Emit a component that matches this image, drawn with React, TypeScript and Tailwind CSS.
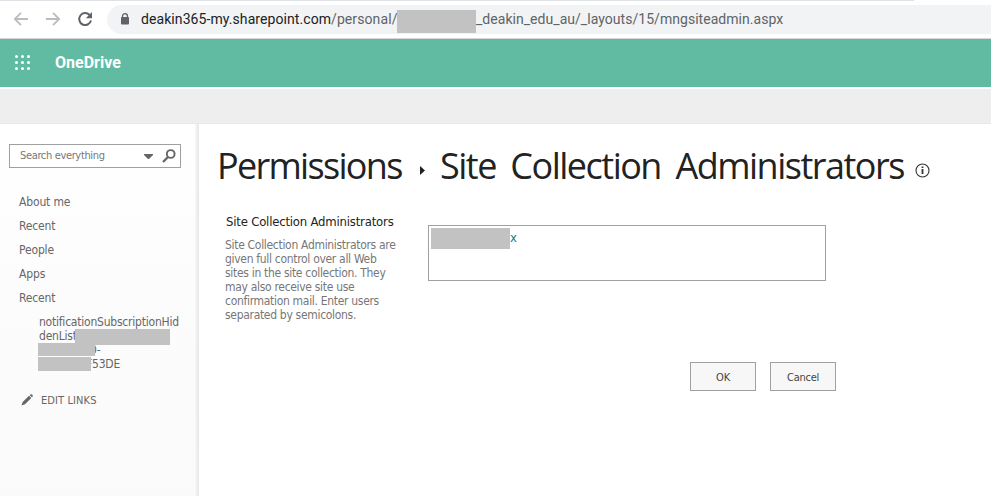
import React from "react";

function BrowserBar() {
  return (
    <header className="flex h-[39px] flex-col border-b border-[#d5d7da] bg-white font-[Roboto,sans-serif]">
      <div className="h-px w-[914px] shrink-0 bg-[#dee1e6]" />
      <div className="mt-1 flex h-[29px] items-center">
        <svg className="-mt-px ml-[13px] size-4 shrink-0" viewBox="0 0 16 16" fill="none" stroke="#babcbe" strokeWidth="1.8">
          <path d="M15 8H2.5M8 1.8L1.8 8L8 14.2" />
        </svg>
        <svg className="-mt-px ml-4 size-4 shrink-0" viewBox="0 0 16 16" fill="none" stroke="#babcbe" strokeWidth="1.8">
          <path d="M1 8H13.5M8 1.8L14.2 8L8 14.2" />
        </svg>
        <svg className="-mt-px ml-4 size-4 shrink-0" viewBox="0 0 16 16">
          <path d="M14 9.6A6 6 0 1 1 12.6 4" fill="none" stroke="#5f6368" strokeWidth="2" />
          <path d="M15 1V7.2H8.8Z" fill="#5f6368" />
        </svg>
        <div className="ml-[14px] flex h-[29px] flex-1 items-center rounded-l-full bg-[#f1f3f4] pl-[13px]">
          <svg className="-mt-0.5 h-3 w-2.5 shrink-0" viewBox="0 0 10 12">
            <path d="M2.5 5V3.2a2.5 2.5 0 0 1 5 0V5" fill="none" stroke="#5f6368" strokeWidth="1.3" />
            <rect x="1" y="4" width="8" height="7.6" rx="1" fill="#5f6368" />
          </svg>
          <div className="ml-[11px] flex items-center text-sm leading-[18px] whitespace-nowrap text-[#5f6368]">
            <span className="-mt-0.5 w-[190px] tracking-[0.08px] text-[#202124]">deakin365-my.sharepoint.com</span>
            <span className="-mt-0.5 w-[66px] tracking-[0.1px]">/personal/</span>
            <span className="mt-[3px] h-[23px] w-[79px] bg-[#c2c2c2]" />
            <span className="-mt-0.5 tracking-[0.04px]">_deakin_edu_au/_layouts/15/mngsiteadmin.aspx</span>
          </div>
        </div>
      </div>
    </header>
  );
}

function SuiteBar() {
  return (
    <div className="flex h-12 items-center bg-[#60bba2] pl-[15px]">
      <svg className="-mt-0.5 size-[15px]" viewBox="0 0 15 15" fill="white">
        {[1.5, 7.5, 13.5].map((y) => [1.5, 7.5, 13.5].map((x) => <circle key={`${x}-${y}`} cx={x} cy={y} r="1.5" />))}
      </svg>
      <span className="ml-[25px] font-[Roboto,sans-serif] text-base font-bold text-white">OneDrive</span>
    </div>
  );
}

function Sidebar() {
  return (
    <aside className="flex w-[199px] shrink-0 bg-gradient-to-b from-white via-[#fcfcfc] via-50% to-[#fafafa] text-[12px] text-[#666]">
      <div className="flex w-[195px] flex-col">
        <div className="mt-5 ml-[9px] flex h-6 w-[172px] shrink-0 items-center border border-[#a0a0a0] bg-white pl-[10px] text-[11px] text-[#777]">
          <span className="mt-px w-[123px] tracking-[-0.35px] whitespace-nowrap">Search everything</span>
          <svg className="mt-px ml-px h-[5px] w-[9px]" viewBox="0 0 9 5"><path d="M0 0H9V1L5 5H4L0 1Z" fill="#666" /></svg>
          <svg className="ml-[9px] size-[14px]" viewBox="0 0 14 14" fill="none" stroke="#666">
            <circle cx="8.7" cy="5" r="3.9" strokeWidth="1.9" />
            <path d="M6 8L1 13" strokeWidth="2.3" />
          </svg>
        </div>
        <nav className="mt-[22px] ml-[19px] flex flex-col leading-6 tracking-[-0.15px]">
          <a>About me</a>
          <a>Recent</a>
          <a>People</a>
          <a>Apps</a>
          <a>Recent</a>
        </nav>
        <div className="mt-[5px] ml-[38px] flex flex-col leading-[14px] tracking-[-0.22px]">
          <span className="h-[14px] pl-px">notificationSubscriptionHid</span>
          <span className="flex h-[14px] pl-px"><span className="w-9">denList</span><span className="h-4 w-[95px] bg-[#c2c2c2]" /></span>
          <span className="flex h-[14px]"><span className="z-10 h-[13px] w-[57px] bg-[#c2c2c2]" /><span className="-ml-[5px]">0-</span></span>
          <span className="flex h-[14px]"><span className="z-10 h-[14px] w-[53px] bg-[#c2c2c2]" /><span className="-ml-[5px]">F53DE</span></span>
        </div>
        <div className="mt-[22px] ml-[21px] flex h-4 items-center text-[11px]">
          <svg className="-mt-0.5 size-3" viewBox="0 0 12 12" fill="#666">
            <path d="M.5 11.5L1.7 8L8 1.8L10.3 4L4 10.2ZM8.7 1.2L9.8 .2Q10.6 0 11.4.7Q12 1.5 11.8 2.2L10.9 3.3Z" />
          </svg>
          <span className="ml-2 tracking-[0.1px]">EDIT LINKS</span>
        </div>
      </div>
      <div className="w-1 bg-gradient-to-r from-[#f8f8f8] to-[#e6e6e6]" />
    </aside>
  );
}

function Content() {
  return (
    <main className="flex-1 bg-white">
      <h1 className="mt-5 ml-[18px] flex h-12 items-center font-['Open_Sans',sans-serif] text-[36px] whitespace-nowrap text-[#222]">
        <span className="-mt-1 w-[203px] tracking-[-1.7px]">Permissions</span>
        <svg className="mt-[5px] h-[9px] w-[5px]" viewBox="0 0 5 9"><path d="M0 0L5 4.5L0 9Z" fill="#222" /></svg>
        <span className="-mt-1 ml-[15px] w-[475px] tracking-[-1.5px] [word-spacing:6.6px]">Site Collection Administrators</span>
        <svg className="mt-[5px] size-[15px]" viewBox="0 0 15 15" fill="none" stroke="#333">
          <circle cx="7.5" cy="7.5" r="6.5" strokeWidth="1.1" />
          <path d="M7.5 6V11M7.5 3.4V5" strokeWidth="1.8" />
        </svg>
      </h1>
      <div className="flex">
        <section className="ml-[26px] w-[203px] pt-[21px] whitespace-nowrap">
          <h2 className="h-[18px] pl-px text-[13px] leading-[17px] tracking-[-0.2px] text-[#222]">Site Collection Administrators</h2>
          <p className="mt-[7px] text-[12px] leading-[14px] tracking-[-0.31px] text-[#777]">
            Site Collection Administrators are<br />given full control over all Web<br />sites in the site collection. They<br />may also receive site use<br />confirmation mail. Enter users<br />separated by semicolons.
          </p>
        </section>
        <div className="mt-[33px] flex h-14 w-[398px] border border-[#a0a0a0] pt-0.5 pl-0.5">
          <span className="h-[21px] w-[79px] bg-[#c2c2c2]" />
          <span className="text-[13px] leading-[20px] text-[#0a8080]">x</span>
        </div>
      </div>
      <div className="mt-10 ml-[491px] flex gap-[14px] text-[11px] tracking-[-0.25px] text-[#444]">
        <button className="h-[29px] w-[66px] border border-[#a0a0a0] bg-[#f7f7f7] pt-1">OK</button>
        <button className="h-[29px] w-[66px] border border-[#a0a0a0] bg-[#f7f7f7] pt-1">Cancel</button>
      </div>
    </main>
  );
}

export default function App() {
  return (
    <div className="flex h-[496px] w-[991px] flex-col overflow-hidden bg-white font-['DejaVu_Sans_Condensed','DejaVu_Sans',sans-serif]">
      <BrowserBar />
      <SuiteBar />
      <div className="mt-0.5 h-[35px] shrink-0 border-b border-[#e8e8e8] bg-[#eee]" />
      <div className="flex flex-1">
        <Sidebar />
        <Content />
      </div>
    </div>
  );
}
